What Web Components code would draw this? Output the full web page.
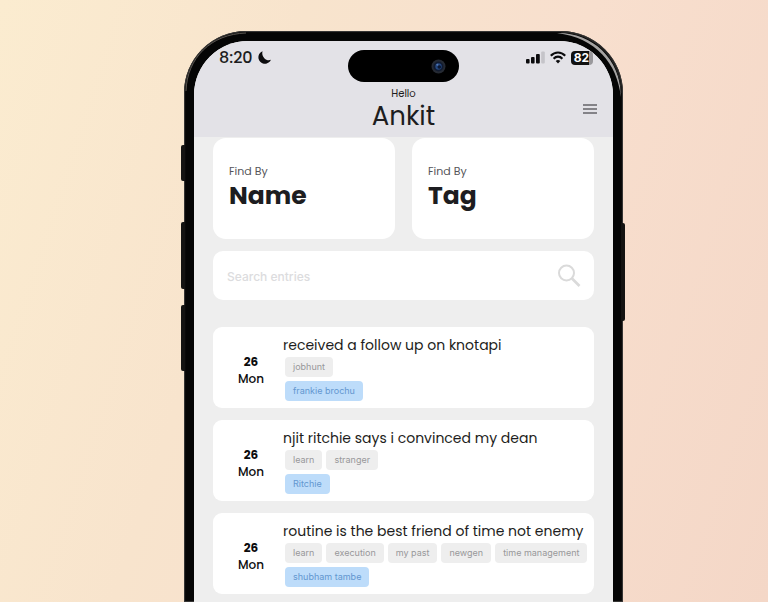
<!DOCTYPE html>
<html lang="en">
<head>
<meta charset="utf-8">
<meta name="viewport" content="width=device-width, initial-scale=1">
<title>Entries</title>
<style>
	* {
		box-sizing: border-box;
	}

	body {
		margin: 0;
		min-height: 100vh;
		display: grid;
		grid-template-columns: minmax(0, 184fr) minmax(0, 439fr) minmax(0, 145fr);
		font-family: Poppins, Inter, sans-serif;
		color: #1d1d20;
		background: linear-gradient(108deg, #fbecd0 0%, #f8e4cd 32%, #f8dfce 62%, #f4d7c7 100%);
	}

	phone-frame {
		grid-column: 2;
	}

	.finders {
		display: grid;
		grid-template-columns: 1fr 1fr;
		gap: 17px;
	}

	.entries {
		display: grid;
		gap: 12px;
		margin-top: 15px;
	}
</style>
</head>
<body>
	<phone-frame>
		<status-bar time="8:20" battery="82"></status-bar>
		<app-header greeting="Hello" name="Ankit"></app-header>
		<app-content>
			<div class="finders">
				<find-card label="Find By">Name</find-card>
				<find-card label="Find By">Tag</find-card>
			</div>
			<search-box placeholder="Search entries"></search-box>
			<div class="entries">
				<entry-card day="26" weekday="Mon" title="received a follow up on knotapi">
					<entry-tag slot="tags">jobhunt</entry-tag>
					<entry-tag slot="people" kind="person">frankie brochu</entry-tag>
				</entry-card>
				<entry-card day="26" weekday="Mon" title="njit ritchie says i convinced my dean">
					<entry-tag slot="tags">learn</entry-tag>
					<entry-tag slot="tags">stranger</entry-tag>
					<entry-tag slot="people" kind="person">Ritchie</entry-tag>
				</entry-card>
				<entry-card day="26" weekday="Mon" title="routine is the best friend of time not enemy">
					<entry-tag slot="tags">learn</entry-tag>
					<entry-tag slot="tags">execution</entry-tag>
					<entry-tag slot="tags">my past</entry-tag>
					<entry-tag slot="tags">newgen</entry-tag>
					<entry-tag slot="tags">time management</entry-tag>
					<entry-tag slot="people" kind="person">shubham tambe</entry-tag>
				</entry-card>
			</div>
		</app-content>
	</phone-frame>

<script>
class PhoneFrame extends HTMLElement {
	constructor() {
		super();
		this.attachShadow({ mode: 'open' });
	}

	connectedCallback() {
		this.shadowRoot.innerHTML = `
			<style>
				:host {
					display: flex;
					position: relative;
					margin-top: 31px;
					padding: 10px 10px 0;
					border-radius: 62px 62px 0 0;
					background: #050505;
					box-shadow: inset 0 0 1px 1px #3c3b3a;
				}

				.screen {
					flex: 1;
					min-width: 0;
					overflow: hidden;
					border-radius: 54px 54px 0 0;
					background: #eeeeee;
				}

				/* hardware keys stick out past the frame */
				.key {
					position: absolute;
					width: 4px;
					background: #141312;
				}

				.left {
					left: -3px;
					border-radius: 2px 0 0 2px;
				}

				.right {
					right: -2px;
					border-radius: 0 2px 2px 0;
				}

				.action { top: 114px; height: 36px; }
				.up { top: 191px; height: 67px; }
				.down { top: 274px; height: 66px; }
				.power { top: 192px; height: 98px; }

				.shine {
					position: absolute;
					top: 0;
					width: 70px;
					height: 70px;
				}

				.shine.start { left: 0; }
				.shine.end { right: 0; }
			</style>
			<span class="key left action"></span>
			<span class="key left up"></span>
			<span class="key left down"></span>
			<span class="key right power"></span>
			<div class="screen"><slot></slot></div>
			<svg class="shine start" viewBox="0 0 70 70" fill="none" aria-hidden="true">
				<path d="M2 60C3 27 27 3 62 2" stroke="#5a5550" stroke-width="1"/>
			</svg>
			<svg class="shine end" viewBox="0 0 70 70" fill="none" aria-hidden="true">
				<path d="M4 2C37 1 68 26 68 66C64 32 43 7 4 2Z" fill="#a5a3a2"/>
				<path d="M8 1C42 2 68 28 68 62" stroke="#2a2928" stroke-width="1"/>
			</svg>
		`;
	}
}

class StatusBar extends HTMLElement {
	constructor() {
		super();
		this.attachShadow({ mode: 'open' });
	}

	connectedCallback() {
		const time = this.getAttribute('time');
		const battery = this.getAttribute('battery');

		this.shadowRoot.innerHTML = `
			<style>
				:host {
					display: grid;
					grid-template-columns: 1fr auto 1fr;
					height: 45px;
					padding: 9px 20px 0;
					box-sizing: border-box;
					background: #e3e2e7;
				}

				.time, .signals {
					display: flex;
					align-items: center;
					height: 15px;
				}

				.time {
					gap: 5px;
					padding-left: 5px;
					font-size: 16px;
					font-weight: 500;
				}

				.signals {
					justify-content: flex-end;
					gap: 5px;
				}

				.island {
					display: flex;
					align-items: center;
					justify-content: flex-end;
					width: 111px;
					height: 32px;
					padding-right: 13px;
					box-sizing: border-box;
					border-radius: 16px;
					background: #000;
				}

				.battery {
					padding: 0 4px 0 3px;
					border-radius: 4px;
					font-family: Inter, sans-serif;
					font-size: 12px;
					line-height: 14px;
					font-weight: 700;
					color: #fff;
					background: linear-gradient(to right, #111 84%, #99989c 84%);
				}
			</style>
			<div class="time">
				<span>${time}</span>
				<svg width="13" height="13" viewBox="0 0 13 13" aria-hidden="true">
					<path d="M4.6 0.2A6.5 6.5 0 1 0 12.9 8.8C11.5 9.4 9.2 9.6 7 7.9C4.6 6 3.7 3 4.6 0.2Z" fill="#0c0c0e"/>
				</svg>
			</div>
			<div class="island">
				<svg width="15" height="15" viewBox="0 0 15 15" aria-hidden="true">
					<circle cx="7.5" cy="7.5" r="7" fill="#252a33"/>
					<circle cx="7.5" cy="7.5" r="5" fill="#111b30"/>
					<circle cx="7.5" cy="7.5" r="3.2" fill="#24477f"/>
					<circle cx="8.3" cy="8" r="1.8" fill="#0d1830"/>
					<circle cx="6.4" cy="5.8" r="1" fill="#5479b4"/>
				</svg>
			</div>
			<div class="signals">
				<svg width="19" height="13" viewBox="0 0 19 13" fill="#0c0c0e" aria-hidden="true">
					<rect x="0" y="8" width="3.6" height="4.5" rx="1"/>
					<rect x="5" y="6" width="3.6" height="6.5" rx="1"/>
					<rect x="10" y="3" width="3.8" height="9.5" rx="1"/>
					<rect x="15.2" y="0.5" width="3.6" height="12" rx="1" fill="#c5c4c9"/>
				</svg>
				<svg width="16" height="13" viewBox="0 0 16 13" fill="none" stroke="#0c0c0e" stroke-width="2.2" aria-hidden="true">
					<path d="M0.8 4.8C5 0.4 11 0.4 15.2 4.8"/>
					<path d="M3.6 7.7C6.2 5 9.8 5 12.4 7.7"/>
					<path d="M8 12.4L5.7 9.9C7 8.7 9 8.7 10.3 9.9Z" fill="#0c0c0e" stroke="none"/>
				</svg>
				<span class="battery">${battery}</span>
			</div>
		`;
	}
}

class AppHeader extends HTMLElement {
	constructor() {
		super();
		this.attachShadow({ mode: 'open' });
	}

	connectedCallback() {
		this.shadowRoot.innerHTML = `
			<style>
				:host {
					display: grid;
					grid-template-columns: 1fr auto 1fr;
					align-items: center;
					height: 51px;
					padding: 0 16px 5px;
					box-sizing: border-box;
					background: #e3e2e7;
				}

				hgroup {
					grid-column: 2;
					margin: 0;
					text-align: center;
				}

				p, h1 {
					margin: 0;
				}

				p {
					font-size: 10px;
					line-height: 14px;
				}

				h1 {
					font-size: 26px;
					line-height: 30px;
					font-weight: 400;
				}

				button {
					justify-self: end;
					display: flex;
					padding: 0;
					border: 0;
					background: none;
				}
			</style>
			<hgroup>
				<p>${this.getAttribute('greeting')}</p>
				<h1>${this.getAttribute('name')}</h1>
			</hgroup>
			<button type="button" aria-label="Menu">
				<svg width="14" height="12" viewBox="0 0 14 12" stroke="#65646a" stroke-width="1.6">
					<path d="M0 2H14M0 6H14M0 10H14"/>
				</svg>
			</button>
		`;
	}
}

class AppContent extends HTMLElement {
	constructor() {
		super();
		this.attachShadow({ mode: 'open' });
	}

	connectedCallback() {
		this.shadowRoot.innerHTML = `
			<style>
				:host {
					display: block;
				}

				main {
					display: flex;
					flex-direction: column;
					gap: 12px;
					padding: 1px 19px 8px;
				}
			</style>
			<main><slot></slot></main>
		`;
	}
}

class FindCard extends HTMLElement {
	constructor() {
		super();
		this.attachShadow({ mode: 'open' });
	}

	connectedCallback() {
		this.shadowRoot.innerHTML = `
			<style>
				:host {
					display: block;
				}

				button {
					display: flex;
					flex-direction: column;
					width: 100%;
					padding: 26px 16px;
					border: 0;
					border-radius: 13px;
					font: inherit;
					color: inherit;
					text-align: left;
					background: #fff;
				}

				.label {
					font-size: 11px;
					line-height: 14px;
					color: #55555a;
				}

				.value {
					font-size: 25px;
					line-height: 35px;
					font-weight: 700;
				}
			</style>
			<button type="button">
				<span class="label">${this.getAttribute('label')}</span>
				<span class="value"><slot></slot></span>
			</button>
		`;
	}
}

class SearchBox extends HTMLElement {
	constructor() {
		super();
		this.attachShadow({ mode: 'open' });
	}

	connectedCallback() {
		const placeholder = this.getAttribute('placeholder');

		this.shadowRoot.innerHTML = `
			<style>
				:host {
					display: block;
				}

				label {
					display: flex;
					align-items: center;
					height: 49px;
					padding: 0 13px 0 14px;
					border-radius: 10px;
					background: #fff;
				}

				input {
					flex: 1;
					min-width: 0;
					padding: 2px 0 0;
					border: 0;
					outline: 0;
					font-family: Inter, sans-serif;
					font-size: 12px;
					font-weight: 500;
					background: none;
				}

				input::placeholder {
					color: #dcdcde;
					opacity: 1;
				}
			</style>
			<label>
				<input type="search" aria-label="${placeholder}" placeholder="${placeholder}">
				<svg width="24" height="24" viewBox="0 0 24 24" fill="none" stroke="#dadada" stroke-width="2" aria-hidden="true">
					<circle cx="9.5" cy="9" r="7.5"/>
					<path d="M15 14.5L22.5 22" stroke-width="2.6"/>
				</svg>
			</label>
		`;
	}
}

class EntryCard extends HTMLElement {
	constructor() {
		super();
		this.attachShadow({ mode: 'open' });
	}

	connectedCallback() {
		this.shadowRoot.innerHTML = `
			<style>
				:host {
					display: block;
				}

				article {
					display: grid;
					grid-template-columns: 54px minmax(0, 1fr);
					align-items: center;
					column-gap: 5px;
					padding: 8px 8px 7px 11px;
					border-radius: 9px;
					background: #fff;
				}

				time {
					display: flex;
					flex-direction: column;
					padding-top: 3px;
					font-size: 12px;
					line-height: 17px;
					font-weight: 500;
					text-align: center;
					color: #0c0c0e;
				}

				b {
					font-weight: 700;
				}

				h2 {
					margin: 0 0 2px;
					font-size: 14px;
					line-height: 20px;
					font-weight: 400;
					white-space: nowrap;
				}

				.row {
					display: flex;
					gap: 4px;
					padding-left: 2px;
				}

				.row + .row {
					margin-top: 4px;
				}
			</style>
			<article>
				<time>
					<b>${this.getAttribute('day')}</b>
					<span>${this.getAttribute('weekday')}</span>
				</time>
				<div>
					<h2>${this.getAttribute('title')}</h2>
					<div class="row"><slot name="tags"></slot></div>
					<div class="row"><slot name="people"></slot></div>
				</div>
			</article>
		`;
	}
}

class EntryTag extends HTMLElement {
	constructor() {
		super();
		this.attachShadow({ mode: 'open' });
	}

	connectedCallback() {
		this.shadowRoot.innerHTML = `
			<style>
				:host {
					display: block;
					padding: 0 8px;
					border-radius: 4px;
					font-family: Inter, sans-serif;
					font-size: 9px;
					line-height: 20px;
					white-space: nowrap;
					color: #98989a;
					background: #eeeeee;
				}

				:host([kind="person"]) {
					color: #6397d0;
					background: #bddcfa;
				}
			</style>
			<slot></slot>
		`;
	}
}

customElements.define('phone-frame', PhoneFrame);
customElements.define('status-bar', StatusBar);
customElements.define('app-header', AppHeader);
customElements.define('app-content', AppContent);
customElements.define('find-card', FindCard);
customElements.define('search-box', SearchBox);
customElements.define('entry-card', EntryCard);
customElements.define('entry-tag', EntryTag);
</script>
</body>
</html>
